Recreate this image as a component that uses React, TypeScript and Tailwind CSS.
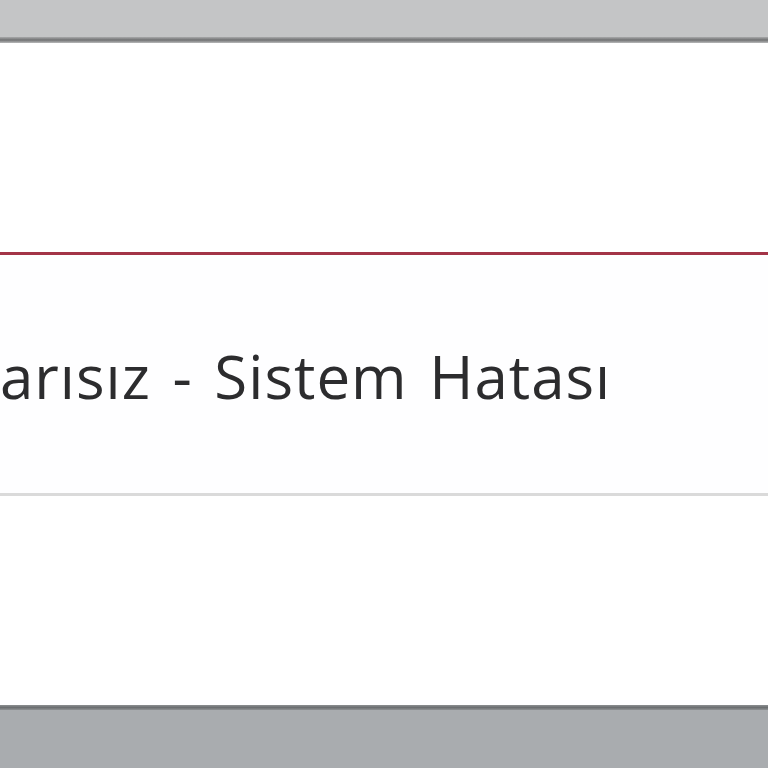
import React from 'react';

const App: React.FC = () => {
  return (
    <div className="h-screen w-full flex flex-col overflow-hidden bg-white" style={{ fontFamily: '"Open Sans", Lato, sans-serif' }}>
      {/* top chrome */}
      <div className="h-[37px] bg-[#c4c5c6]" />
      <div className="h-[6px] bg-gradient-to-b from-[#a9aaab] via-[#717273] to-[#b9babb]" />

      <div className="h-[209px] bg-white" />
      <div className="h-[3px] bg-[#a33447]" />

      <div className="h-[238px] flex items-center bg-[#fefeff] overflow-hidden">
        <span className="whitespace-nowrap text-[60px] leading-none tracking-[1px] [word-spacing:5px] text-[#2c2c2e] mt-[4px]">
          arısız - Sistem Hatası
        </span>
      </div>
      <div className="h-[3px] bg-[#dadada]" />

      <div className="h-[209px] bg-white" />
      <div className="h-[5px] bg-gradient-to-b from-[#8d9092] via-[#6c6f71] to-[#8f9294]" />
      <div className="flex-1 bg-[#a9acaf]" />
    </div>
  );
};

export default App;
